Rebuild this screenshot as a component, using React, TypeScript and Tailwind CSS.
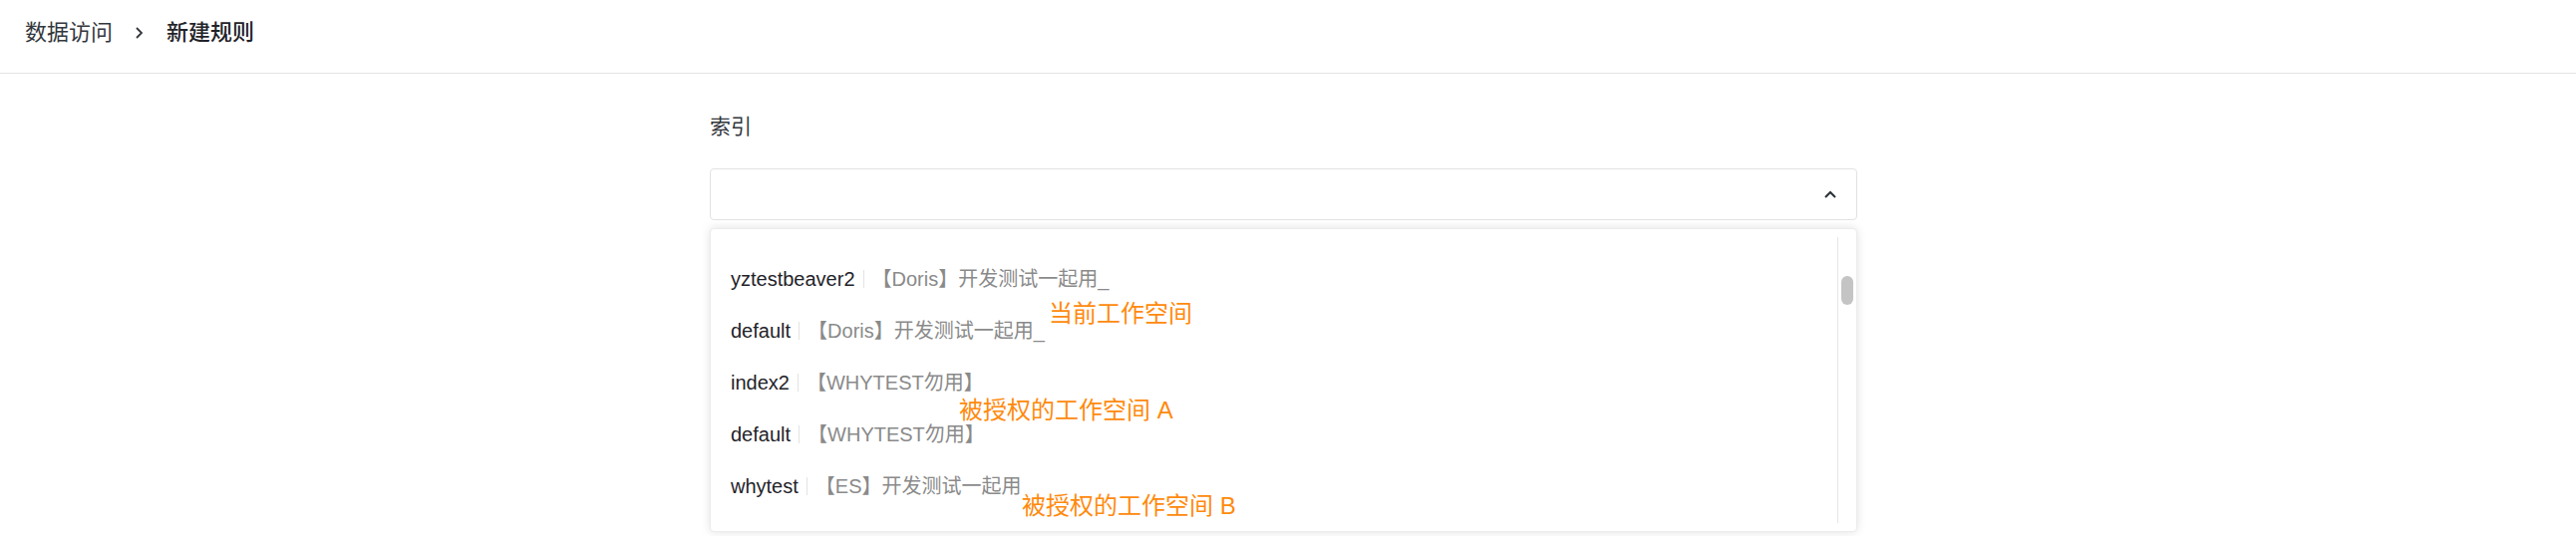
const items = [
  { name: "yztestbeaver2", desc: "【Doris】开发测试一起用_" },
  { name: "default", desc: "【Doris】开发测试一起用_" },
  { name: "index2", desc: "【WHYTEST勿用】" },
  { name: "default", desc: "【WHYTEST勿用】" },
  { name: "whytest", desc: "【ES】开发测试一起用" },
];

const font = {
  fontFamily: '"Liberation Sans", "Noto Sans CJK SC", sans-serif',
};

export default function App() {
  return (
    <div className="min-h-[538px] bg-white text-[#1f2329]" style={font}>
      {/* Breadcrumb */}
      <header className="h-[74px] border-b border-[#e4e4e4] flex items-center pl-[25px] pb-[8px] text-[22px]">
        <span className="text-[#33373d]">数据访问</span>
        <svg width="10" height="14" viewBox="0 0 10 14" className="mx-[22px] mt-[1px]">
          <polyline points="2,2 7,7 2,12" fill="none" stroke="#33373d" strokeWidth="1.8" />
        </svg>
        <span className="text-[#1f2329] font-medium">新建规则</span>
      </header>

      {/* Form */}
      <main className="pl-[712px] pt-[38px]">
        <div className="relative w-[1151px]">
          <div className="text-[21px] leading-[30px] text-[#33373d]">索引</div>
          <div className="mt-[27px] h-[52px] rounded-[4px] border border-[#e2e2e2] flex items-center justify-end pr-[20px]">
            <svg width="12" height="8" viewBox="0 0 12 8">
              <polyline points="1,7 6,2 11,7" fill="none" stroke="#2b2f36" strokeWidth="2" />
            </svg>
          </div>

          {/* Dropdown */}
          <div className="absolute left-0 top-[117px] w-[1151px] h-[305px] rounded-[4px] border border-[#ececec] bg-white shadow-[0_0_10px_rgba(0,0,0,0.12)] flex">
            <ul className="flex-1 pt-[24px] pl-[20px]">
              {items.map((it, i) => (
                <li key={i} className="h-[52px] flex items-center text-[20px] leading-none">
                  <span className="text-[#1f2329]">{it.name}</span>
                  <span className="mx-[8px] w-px h-[18px] bg-[#e3e3e3]" />
                  <span className="text-[#8a8a8a]">{it.desc}</span>
                </li>
              ))}
            </ul>
            <div className="w-[19px] my-[8px] border-l border-[#e6e6e6] pt-[39px] pl-[3px]">
              <div className="w-[12px] h-[29px] rounded-full bg-[#c4c4c4]" />
            </div>

            {/* Annotations */}
            <span className="absolute left-[339px] top-[70px] text-[24px] leading-[30px] text-[#ff8a0d]">
              当前工作空间
            </span>
            <span className="absolute left-[249px] top-[167px] text-[24px] leading-[30px] text-[#ff8a0d]">
              被授权的工作空间 A
            </span>
            <span className="absolute left-[312px] top-[263px] text-[24px] leading-[30px] text-[#ff8a0d]">
              被授权的工作空间 B
            </span>
          </div>
        </div>
      </main>
    </div>
  );
}
